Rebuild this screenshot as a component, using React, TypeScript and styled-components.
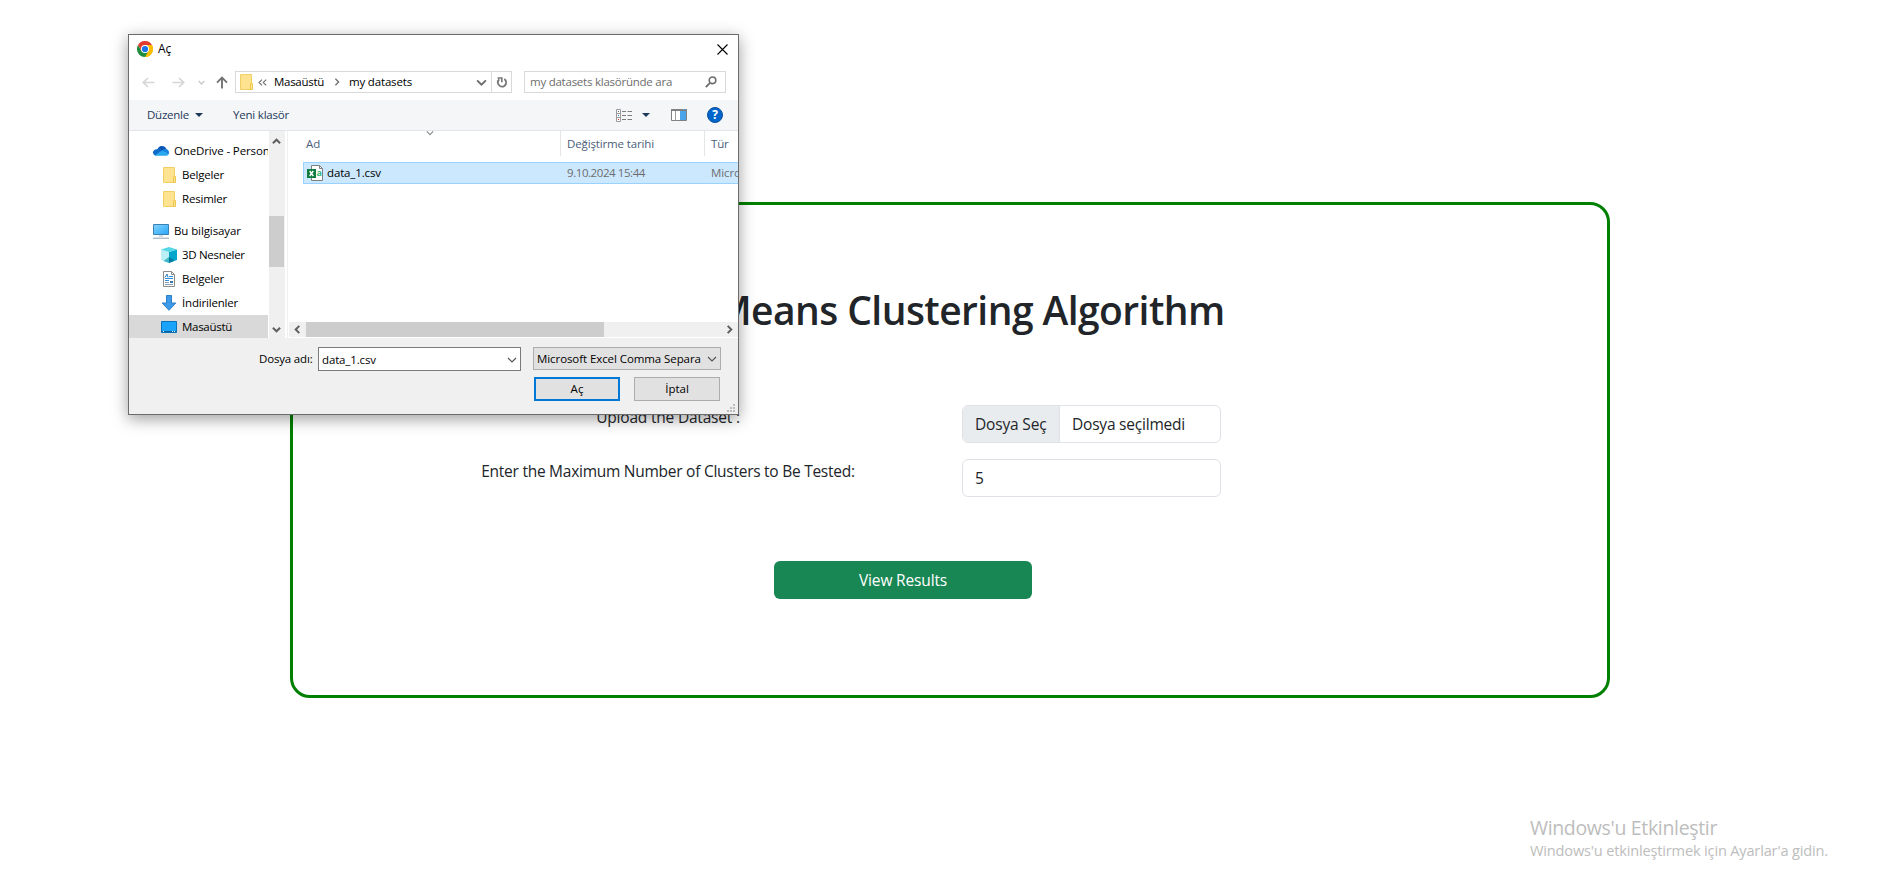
import React from 'react';
import styled, { createGlobalStyle } from 'styled-components';

const GlobalStyle = createGlobalStyle`
  *, *::before, *::after { box-sizing: border-box; }
  body {
    margin: 0;
    background: #fff;
    color: #212529;
    font-family: "Open Sans", "Noto Sans", sans-serif;
    overflow: hidden;
  }
`;

const Label = styled.span<{ $track?: number }>`
  white-space: pre;
  letter-spacing: ${(p) => p.$track ?? 0}px;
`;

/* ---------- Web page ---------- */

const Page = styled.div`
  position: relative;
  width: 1879px;
  height: 879px;
  padding: 202px 0 0 290px;
  overflow: hidden;
`;

const Card = styled.main`
  width: 1320px;
  height: 496px;
  border: 3px solid green;
  border-radius: 20px;
  padding: 81px 0 0 111px;
`;

const Title = styled.h1`
  margin: 0 0 71px -109px;
  width: 1314px;
  height: 48px;
  font-family: "Open Sans", sans-serif;
  font-size: 39px;
  font-weight: 600;
  line-height: 48px;
  letter-spacing: -0.56px;
  text-align: center;
`;

const Form = styled.form`
  display: grid;
  grid-template-columns: 528px 259px;
  column-gap: 30px;
  row-gap: 16px;
  font-size: 15.5px;
  line-height: 24px;
`;

const FieldLabel = styled.label<{ $track: number }>`
  text-align: center;
  letter-spacing: ${(p) => p.$track}px;
`;

const Field = styled.div`
  display: flex;
  height: 38px;
  border: 1px solid #dee2e6;
  border-radius: 6px;
  overflow: hidden;
  line-height: 36px;
`;

const FilePick = styled.span`
  width: 97px;
  padding-left: 12px;
  background: #e9ecef;
  border-right: 1px solid #dee2e6;
  letter-spacing: -0.17px;
`;

const FieldValue = styled.span`
  padding-left: 12px;
  letter-spacing: -0.21px;
`;

const Submit = styled.button`
  display: block;
  width: 258px;
  height: 38px;
  margin: 64px 0 0 370px;
  border: 0;
  border-radius: 6px;
  background: #198754;
  color: #fff;
  font: 400 15.5px/38px "Open Sans", sans-serif;
  letter-spacing: -0.16px;
  padding: 0;
`;

const Watermark = styled.aside`
  position: absolute;
  left: 1530px;
  top: 814px;
  color: #bdbdbd;
  white-space: nowrap;
`;

const WatermarkTitle = styled.div`
  font-size: 19.5px;
  line-height: 27px;
  letter-spacing: -0.34px;
`;

const WatermarkText = styled.div`
  font-size: 14.6px;
  line-height: 18px;
  letter-spacing: -0.18px;
`;

/* ---------- File dialog ---------- */

const Dialog = styled.section`
  position: absolute;
  left: 128px;
  top: 34px;
  width: 611px;
  height: 381px;
  display: flex;
  flex-direction: column;
  border: 1px solid #6b6b6b;
  background: #fff;
  color: #000;
  font-size: 11.5px;
  line-height: 16px;
  box-shadow: 0 4px 15px rgba(0, 0, 0, 0.38);
  overflow: hidden;
`;

const TitleBar = styled.header`
  display: flex;
  align-items: center;
  height: 28px;
  padding: 0 10px 0 8px;
  gap: 5px;
  font-size: 12px;
  svg:last-child { margin-left: auto; }
`;

const NavBar = styled.div`
  display: flex;
  height: 37px;
  padding: 8px 12px 7px 12px;
`;

const NavButtons = styled.div`
  display: flex;
  align-items: center;
  width: 94px;
`;

const Spaced = styled.span<{ $left: number }>`
  display: flex;
  margin-left: ${(p) => p.$left}px;
`;

const Address = styled.div`
  display: flex;
  align-items: center;
  width: 277px;
  height: 22px;
  border: 1px solid #d9d9d9;
  padding-left: 3px;
`;

const Crumb = styled(Label)<{ $gap: number }>`
  margin-left: ${(p) => p.$gap}px;
`;

const AddressActions = styled.div`
  display: flex;
  align-items: center;
  height: 20px;
  margin-left: auto;
`;

const Refresh = styled.div`
  display: flex;
  align-items: center;
  justify-content: center;
  width: 20px;
  height: 20px;
  border-left: 1px solid #d9d9d9;
  margin-left: 4px;
`;

const Search = styled.div`
  display: flex;
  align-items: center;
  justify-content: space-between;
  width: 202px;
  height: 22px;
  margin-left: 12px;
  padding: 0 8px 0 5px;
  border: 1px solid #d9d9d9;
  color: #6d6d6d;
`;

const Toolbar = styled.div`
  display: flex;
  align-items: center;
  height: 31px;
  padding: 0 15px 0 18px;
  background: #f5f6f7;
  border-bottom: 1px solid #e3e5e8;
  color: #1e395b;
`;

const ToolGroup = styled.div<{ $left: string; $gap: number }>`
  display: flex;
  align-items: center;
  margin-left: ${(p) => p.$left};
  gap: ${(p) => p.$gap}px;
`;

const Body = styled.div`
  display: flex;
  height: 207px;
`;

const Tree = styled.nav`
  width: 139px;
  height: 207px;
  padding-top: 8px;
  overflow: hidden;
`;

const TreeRow = styled.div<{ $level: number; $selected?: boolean; $spaced?: boolean }>`
  display: flex;
  align-items: center;
  height: 24px;
  gap: 5px;
  margin-top: ${(p) => (p.$spaced ? 8 : 0)}px;
  padding-left: ${(p) => (p.$level ? 32 : 24)}px;
  background: ${(p) => (p.$selected ? '#d9d9d9' : 'transparent')};
  svg { flex: none; }
`;

const TreeScroll = styled.div`
  display: flex;
  flex-direction: column;
  align-items: center;
  width: 17px;
  padding: 6px 1px 4px 0;
  border-left: 1px solid #fff;
  background: #f0f0f0;
`;

const TreeThumb = styled.div`
  width: 15px;
  height: 51px;
  margin: 70px 0 auto;
  background: #cdcdcd;
`;

const Divider = styled.div`
  width: 3px;
  margin-right: 1px;
  border-right: 1px solid #f0f0f0;
`;

const FileList = styled.div`
  display: flex;
  flex-direction: column;
  flex: 1;
  min-width: 0;
  overflow: hidden;
`;

const ColumnHead = styled.div`
  display: flex;
  height: 25px;
  margin-bottom: 6px;
  line-height: 26px;
  color: #4c607a;
`;

const HeadCell = styled.div<{ $width: number; $pad: number }>`
  display: flex;
  flex: none;
  width: ${(p) => p.$width}px;
  padding-left: ${(p) => p.$pad}px;
  border-right: 1px solid #e5e5e5;
`;

const SortMark = styled.div`
  margin: -2px 0 0 106px;
  line-height: 0;
`;

const FileRow = styled.div`
  display: flex;
  align-items: center;
  flex: none;
  width: 520px;
  height: 22px;
  margin-left: 14px;
  border: 1px solid #99d1ff;
  background: #cce8ff;
`;

const FileCell = styled.div<{ $width: number }>`
  display: flex;
  align-items: center;
  flex: none;
  gap: 4px;
  width: ${(p) => p.$width}px;
  padding-left: 3px;
`;

const FileMeta = styled(FileCell)`
  color: #6d6d6d;
  padding-left: 0;
`;

const ListScroll = styled.div`
  display: flex;
  align-items: center;
  height: 15px;
  margin-top: auto;
  margin-bottom: 1px;
  padding: 0 4px 0 4px;
  background: #f0f0f0;
`;

const ListThumb = styled.div`
  width: 298px;
  height: 15px;
  margin: 0 auto 0 4px;
  background: #cdcdcd;
`;

const Footer = styled.footer`
  position: relative;
  flex: 1;
  padding: 9px 17px 0 130px;
  background: #f0f0f0;
`;

const FooterLine = styled.div`
  display: flex;
  align-items: center;
  height: 24px;
`;

const NameInput = styled.div`
  display: flex;
  align-items: center;
  justify-content: space-between;
  width: 203px;
  height: 24px;
  margin-left: auto;
  padding: 1px 3px 0 3px;
  border: 1px solid #7a7a7a;
  background: #fff;
`;

const TypeSelect = styled.div`
  display: flex;
  align-items: center;
  justify-content: space-between;
  width: 188px;
  height: 23px;
  margin: 0 0 1px 12px;
  padding: 0 3px 0 3px;
  border: 1px solid #adadad;
  background: #e1e1e1;
`;

const Actions = styled.div`
  display: flex;
  justify-content: flex-end;
  gap: 14px;
  margin: 6px 1px 0 0;
`;

const DialogButton = styled.button<{ $primary?: boolean }>`
  width: 86px;
  height: 24px;
  padding: 0;
  border: ${(p) => (p.$primary ? '2px solid #0078d7' : '1px solid #adadad')};
  background: #e1e1e1;
  color: #000;
  font: 400 11.5px/18px "Open Sans", sans-serif;
`;

const Grip = styled.svg`
  position: absolute;
  right: 3px;
  bottom: 2px;
`;

/* ---------- Icons ---------- */

const ChromeIcon = () => (
  <svg width="16" height="16" viewBox="0 0 48 48">
    <path d="M24 24 44.8 12A24 24 0 0 1 24 48Z" fill="#fbbc04" />
    <path d="M44.8 12A24 24 0 0 1 24 48L34.4 30 34.4 18 24 12Z" fill="#fbbc04" />
    <path d="M3.2 12A24 24 0 0 0 24 48L34.4 30 13.6 30Z" fill="#1e8e3e" />
    <path d="M3.2 12A24 24 0 0 1 44.8 12H24L13.6 30Z" fill="#e33b2e" />
    <circle cx="24" cy="24" r="12" fill="#fff" />
    <circle cx="24" cy="24" r="9.3" fill="#1a73e8" />
  </svg>
);

const CloseIcon = () => (
  <svg width="11" height="11" viewBox="0 0 11 11">
    <path d="M.5.5l10 10M10.5.5l-10 10" stroke="#000" strokeWidth="1.1" />
  </svg>
);

const ArrowIcon = ({ back }: { back?: boolean }) => (
  <svg width="13" height="11" viewBox="0 0 13 11" fill="none" stroke="#d6d6d6" strokeWidth="1.7">
    <path d={back ? 'M12.5 5.5H1.5M6 1 1.3 5.5 6 10' : 'M.5 5.5h11M7 1l4.700 4.500L7 10'} />
  </svg>
);

const UpIcon = () => (
  <svg width="12" height="13" viewBox="0 0 12 13" fill="none" stroke="#737373" strokeWidth="1.9">
    <path d="M6 12.500V2M1 6.700 6 1.700l5 5" />
  </svg>
);

const Chevron = ({ dir = 'down', size = 8, color = '#606060', weight = 1.5 }: {
  dir?: 'down' | 'up' | 'left' | 'right'; size?: number; color?: string; weight?: number;
}) => {
  const d = { down: 'M1 3l4 4 4-4', up: 'M1 7l4-4 4 4', left: 'M7 1 3 5l4 4', right: 'M3 1l4 4-4 4' }[dir];
  return (
    <svg width={size} height={size} viewBox="0 0 10 10">
      <path d={d} fill="none" stroke={color} strokeWidth={(weight * 10) / size} />
    </svg>
  );
};

const BackCrumbs = () => (
  <svg width="9" height="7" viewBox="0 0 9 7">
    <path d="M4 .6 1 3.500l3 2.900M8.200.6l-3 2.900 3 2.900" fill="none" stroke="#6d6d6d" strokeWidth="1.1" />
  </svg>
);

const RefreshIcon = () => (
  <svg width="12" height="13" viewBox="0 0 12 13" fill="none" stroke="#757575" strokeWidth="1.8">
    <path d="M3.300 3.200A4.200 4.200 0 1 0 10.200 6.300" />
    <path d="M1.500 2h4.300v4.300" strokeWidth="1.600" />
    <path d="M10.200 6.500A4.200 4.200 0 0 0 8.300 3.100" />
  </svg>
);

const SearchIcon = () => (
  <svg width="12" height="12" viewBox="0 0 12 12" fill="none" stroke="#6d6d6d">
    <circle cx="7.500" cy="4.300" r="3.300" strokeWidth="1.6" />
    <path d="M5 6.800.8 11.200" strokeWidth="1.8" />
  </svg>
);

const Triangle = () => (
  <svg width="8" height="4" viewBox="0 0 8 4">
    <path d="M0 0h8L4 4Z" fill="#1e395b" />
  </svg>
);

const ViewIcon = () => (
  <svg width="16" height="13" viewBox="0 0 16 13">
    <path d="M.5.5h4v12h-4zM.5 4.500h4M.5 8.500h4" fill="#fff" stroke="#9a9a9a" />
    <path d="M2 2h1v1H2z" fill="#4a6fa5" />
    <path d="M2 6h1v1H2z" fill="#3b7fd4" />
    <path d="M2 10h1v1H2z" fill="#e03030" />
    <path d="M6 2.500h4M11.500 2.500H16M6 6.500h4M11.500 6.500H16M6 10.500h4M11.500 10.500H16" stroke="#7d7d7d" />
  </svg>
);

const PaneIcon = () => (
  <svg width="16" height="12" viewBox="0 0 16 12">
    <path d="M.5.5h15v11H.5z" fill="#fff" stroke="#808080" />
    <path d="M0 0h16v2H0z" fill="#808080" />
    <path d="M4.500 2v9.500" stroke="#9a9a9a" />
    <path d="M9 2h6v9H9z" fill="#4ba3ea" />
    <path d="M12 .500h1M14 .500h1" stroke="#4ba3ea" />
  </svg>
);

const HelpBadge = styled.span`
  display: flex;
  align-items: center;
  justify-content: center;
  width: 16px;
  height: 16px;
  border: 1px solid #0a4f9c;
  border-radius: 50%;
  background: #0066cc;
  color: #fff;
  font-size: 12px;
  font-weight: 700;
  line-height: 14px;
`;

const FolderIcon = ({ box = 16 }: { box?: number }) => (
  <svg width={box} height="16" viewBox={`${(16 - box) / 2} 0 ${box} 16`}>
    <path d="M2.500.500h11v15h-11z" fill="#ffe391" stroke="#f0cf63" />
    <path d="M12.500 9.500h2v6h-2z" fill="#ffe391" stroke="#ecc850" />
  </svg>
);

const CloudIcon = () => (
  <svg width="16" height="16" viewBox="0 0 16 16">
    <path d="M4.200 8.500C4 5 6.500 3 9 3c2 0 3.700 1 4.300 3L9 10Z" fill="#0a56b5" />
    <path d="M3.800 6.200c2-.8 3.600.3 5.200 1.300L3 12.800C1.200 12.500 0 11.200 0 9.600c0-1.900 1.600-3.400 3.800-3.400Z" fill="#0f6cc8" />
    <path d="M9 7.500c1.500-1.500 3-1.800 4.200-1.500C15 6.300 16 7.800 16 9.400c0 .8-.2 1.500-.6 2Z" fill="#1684dc" />
    <path d="M2 12.300 9 7.500l6.600 3.700c-.6.9-1.500 1.500-2.600 1.500H3.500c-.6 0-1.100-.1-1.500-.4Z" fill="#29a8ef" />
  </svg>
);

const PcIcon = () => (
  <svg width="16" height="16" viewBox="0 0 16 16">
    <defs>
      <linearGradient id="pc" x1="0" y1="0" x2="1" y2="1">
        <stop offset="0" stopColor="#86d4ff" />
        <stop offset="1" stopColor="#27a6f5" />
      </linearGradient>
    </defs>
    <path d="M.500 1.500h15v10H.500z" fill="url(#pc)" stroke="#3b82b4" />
    <path d="M6 12h4v2H6z" fill="#d4dde4" />
    <path d="M0 15.200h16" stroke="#8fa3b1" />
  </svg>
);

const CubeIcon = () => (
  <svg width="16" height="16" viewBox="0 0 16 16">
    <path d="M0 2.500 8 5v11l-8-3Z" fill="#b9eff5" />
    <path d="M8 5l8-2.500v10.500L8 16Z" fill="#00a5cc" />
    <path d="M8 10l5.500 3.500L8 16Z" fill="#047b9e" />
    <path d="M8 10v6l-5.500-2Z" fill="#3fb9c9" />
    <path d="M0 2.500 8 0l8 2.500L8 5Z" fill="#53d7e6" />
  </svg>
);

const DocIcon = () => (
  <svg width="16" height="16" viewBox="0 0 16 16">
    <path d="M2.500.500h8l3 3v12h-11z" fill="#fff" stroke="#8c8c8c" />
    <path d="M10.500.500v3h3" fill="none" stroke="#8c8c8c" />
    <path d="M4 6.500 6 3l1 3.500" fill="none" stroke="#2d7fc9" />
    <path d="M8 5.500h4M4 7.500h8M4 9.500h4" stroke="#2d8fe0" />
    <path d="M9 10h3v2H9z" fill="#3776a8" />
    <path d="M4 11.500h4M4 13.500h8" stroke="#8aa0b2" />
  </svg>
);

const DownloadIcon = () => (
  <svg width="16" height="16" viewBox="0 0 16 16">
    <path d="M5.500.500h5v7.500h4.300L8 15.300 1.200 8h4.300z" fill="#3c9ae8" stroke="#2f7fc6" />
  </svg>
);

const DesktopIcon = () => (
  <svg width="16" height="16" viewBox="0 0 16 16">
    <path d="M.500 2.500h15v11H.500z" fill="#1aa3fb" stroke="#0873bb" />
    <path d="M1 12.500h14" stroke="#0b5f9c" />
    <path d="M2 12.500h1M11 12.500h1M13 12.500h1" stroke="#fff" />
  </svg>
);

const LetterMark = styled.text`
  font-family: "Open Sans", sans-serif;
  font-weight: 700;
`;

const CsvIcon = () => (
  <svg width="16" height="16" viewBox="0 0 16 16">
    <path d="M4.500.500h8l3 3v12h-11z" fill="#fff" stroke="#7f7f7f" />
    <path d="M12.500.500v3h3" fill="none" stroke="#7f7f7f" />
    <LetterMark x="9.600" y="11" fontSize="9" fill="#2fb67c">a</LetterMark>
    <path d="M0 4h9v9H0z" fill="#107c41" />
    <path d="M2.700 6 6.300 11M6.300 6 2.700 11" stroke="#fff" strokeWidth="1.400" />
  </svg>
);

/* ---------- Data ---------- */

const tree = [
  { text: 'OneDrive - Person', icon: CloudIcon, level: 0, track: -0.13 },
  { text: 'Belgeler', icon: FolderIcon, level: 1, track: -0.2 },
  { text: 'Resimler', icon: FolderIcon, level: 1, track: -0.2 },
  { text: 'Bu bilgisayar', icon: PcIcon, level: 0, track: -0.1, spaced: true },
  { text: '3D Nesneler', icon: CubeIcon, level: 1, track: -0.3 },
  { text: 'Belgeler', icon: DocIcon, level: 1, track: -0.2 },
  { text: 'İndirilenler', icon: DownloadIcon, level: 1, track: -0.19 },
  { text: 'Masaüstü', icon: DesktopIcon, level: 1, track: -0.29, selected: true },
];

const FileDialog = () => (
  <Dialog>
    <TitleBar>
      <ChromeIcon />
      <Label>Aç</Label>
      <CloseIcon />
    </TitleBar>

    <NavBar>
      <NavButtons>
        <Spaced $left={1}><ArrowIcon back /></Spaced>
        <Spaced $left={17}><ArrowIcon /></Spaced>
        <Spaced $left={13}><Chevron size={7} color="#c9c9c9" weight={1.4} /></Spaced>
        <Spaced $left={11}><UpIcon /></Spaced>
      </NavButtons>
      <Address>
        <FolderIcon box={14} />
        <Spaced $left={5}><BackCrumbs /></Spaced>
        <Crumb $gap={7} $track={-0.29}>Masaüstü</Crumb>
        <Spaced $left={9}><Chevron dir="right" size={8} color="#6d6d6d" weight={1.3} /></Spaced>
        <Crumb $gap={8} $track={-0.17}>my datasets</Crumb>
        <AddressActions>
          <Chevron size={11} color="#6d6d6d" weight={1.9} />
          <Refresh><RefreshIcon /></Refresh>
        </AddressActions>
      </Address>
      <Search>
        <Label $track={-0.24}>my datasets klasöründe ara</Label>
        <SearchIcon />
      </Search>
    </NavBar>

    <Toolbar>
      <ToolGroup $left="0" $gap={6}>
        <Label $track={-0.24}>Düzenle</Label>
        <Triangle />
      </ToolGroup>
      <ToolGroup $left="30px" $gap={0}>
        <Label $track={-0.2}>Yeni klasör</Label>
      </ToolGroup>
      <ToolGroup $left="auto" $gap={10}>
        <ViewIcon />
        <Triangle />
      </ToolGroup>
      <ToolGroup $left="21px" $gap={20}>
        <PaneIcon />
        <HelpBadge>?</HelpBadge>
      </ToolGroup>
    </Toolbar>

    <Body>
      <Tree>
        {tree.map(({ icon: Icon, ...row }, i) => (
          <TreeRow key={i} $level={row.level} $selected={row.selected} $spaced={row.spaced}>
            <Icon />
            <Label $track={row.track}>{row.text}</Label>
          </TreeRow>
        ))}
      </Tree>
      <TreeScroll>
        <Chevron dir="up" size={9} weight={2} />
        <TreeThumb />
        <Chevron size={9} weight={2} />
      </TreeScroll>
      <Divider />
      <FileList>
        <ColumnHead>
          <HeadCell $width={272} $pad={17}>
            <Label>Ad</Label>
            <SortMark><Chevron size={8} color="#8a8a8a" weight={1.1} /></SortMark>
          </HeadCell>
          <HeadCell $width={144} $pad={6}><Label $track={-0.13}>Değiştirme tarihi</Label></HeadCell>
          <HeadCell $width={80} $pad={6}><Label $track={-0.15}>Tür</Label></HeadCell>
        </ColumnHead>
        <FileRow>
          <FileCell $width={263}>
            <CsvIcon />
            <Label $track={-0.14}>data_1.csv</Label>
          </FileCell>
          <FileMeta $width={144}><Label $track={-0.43}>9.10.2024 15:44</Label></FileMeta>
          <FileMeta $width={108}><Label $track={-0.1}>Microsoft Excel</Label></FileMeta>
        </FileRow>
        <ListScroll>
          <Chevron dir="left" size={9} weight={2} />
          <ListThumb />
          <Chevron dir="right" size={9} weight={2} />
        </ListScroll>
      </FileList>
    </Body>

    <Footer>
      <FooterLine>
        <Label $track={-0.17}>Dosya adı:</Label>
        <NameInput>
          <Label $track={-0.14}>data_1.csv</Label>
          <Chevron size={10} color="#555" weight={1.2} />
        </NameInput>
        <TypeSelect>
          <Label $track={-0.08}>Microsoft Excel Comma Separa</Label>
          <Chevron size={10} color="#555" weight={1.2} />
        </TypeSelect>
      </FooterLine>
      <Actions>
        <DialogButton $primary>Aç</DialogButton>
        <DialogButton>İptal</DialogButton>
      </Actions>
      <Grip width="8" height="8" viewBox="0 0 8 8">
        <path d="M6 0h2v2H6zM3 3h2v2H3zM6 3h2v2H6zM0 6h2v2H0zM3 6h2v2H3zM6 6h2v2H6z" fill="#bcbcbc" />
      </Grip>
    </Footer>
  </Dialog>
);

export default function App() {
  return (
    <>
      <GlobalStyle />
      <Page>
        <Card>
          <Title>K-Means Clustering Algorithm</Title>
          <Form>
            <FieldLabel $track={-0.2}>Upload the Dataset :</FieldLabel>
            <Field>
              <FilePick>Dosya Seç</FilePick>
              <FieldValue>Dosya seçilmedi</FieldValue>
            </Field>
            <FieldLabel $track={-0.26}>Enter the Maximum Number of Clusters to Be Tested:</FieldLabel>
            <Field>
              <FieldValue>5</FieldValue>
            </Field>
          </Form>
          <Submit type="button">View Results</Submit>
        </Card>
        <Watermark>
          <WatermarkTitle>Windows'u Etkinleştir</WatermarkTitle>
          <WatermarkText>Windows'u etkinleştirmek için Ayarlar'a gidin.</WatermarkText>
        </Watermark>
        <FileDialog />
      </Page>
    </>
  );
}
